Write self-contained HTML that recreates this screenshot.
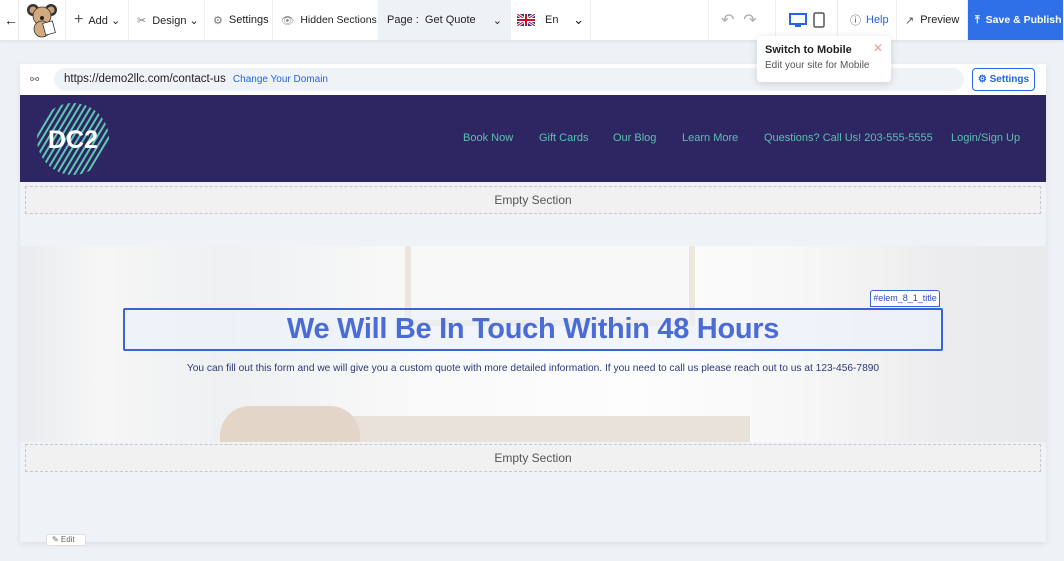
<!DOCTYPE html>
<html><head><meta charset="utf-8"><style>
*{box-sizing:border-box;margin:0;padding:0}
body{width:1064px;height:561px;overflow:hidden;background:#eef2f6;font-family:"Liberation Sans",sans-serif;position:relative;font-size:12px;color:#333}
.top{position:absolute;left:0;top:0;width:1064px;height:41px;background:#fff;border-bottom:1px solid #e3e6ea;box-shadow:0 1px 3px rgba(0,0,0,.06)}
.it{position:absolute;top:0;height:40px;display:flex;align-items:center;border-right:1px solid #eceef1;font-size:11px;color:#222;padding-left:8px;white-space:nowrap;overflow:hidden}
.a{position:absolute}
.frame{position:absolute;left:20px;top:64px;width:1026px;height:478px;background:#eff3f7;box-shadow:0 2px 6px rgba(0,0,0,.08)}
.empty{position:absolute;left:5px;width:1016px;height:28px;background:#f1f1f1;border:1px dashed #c8c8c8;text-align:center;line-height:27px;font-size:12px;color:#555}
.nav a{color:#5bc0ae;text-decoration:none;font-size:11px;position:absolute;top:37px;white-space:nowrap}
</style></head><body>
<div class="top">
 <div class="it" style="left:0;width:19px;padding-left:4px;font-size:14px">←</div>
 <div class="it" style="left:19px;width:47px;padding-left:7px">
  <svg width="32" height="36" viewBox="0 0 32 36"><circle cx="7" cy="8" r="6" fill="#333"/><circle cx="25" cy="8" r="6" fill="#333"/><circle cx="7" cy="8" r="3.5" fill="#c9a07a"/><circle cx="25" cy="8" r="3.5" fill="#c9a07a"/><ellipse cx="16" cy="14" rx="9" ry="9" fill="#d2aa80" stroke="#333" stroke-width=".8"/><ellipse cx="16" cy="27" rx="8" ry="8" fill="#d2aa80" stroke="#333" stroke-width=".8"/><rect x="18" y="20" width="10" height="12" fill="#fff" stroke="#333" stroke-width=".8" transform="rotate(-15 23 26)"/><circle cx="16" cy="16" r="2" fill="#222"/></svg></div>
 <div class="it" style="left:66px;width:63px"><span style="font-size:16px;color:#555;margin-right:5px">+</span>Add ⌄</div>
 <div class="it" style="left:129px;width:76px"><span style="color:#777;margin-right:6px">✂</span>Design ⌄</div>
 <div class="it" style="left:205px;width:68px"><span style="color:#777;margin-right:6px">⚙</span>Settings</div>
 <div class="it" style="left:273px;width:106px;font-size:10.5px"><span style="color:#888;margin-right:6px">👁</span>Hidden Sections</div>
 <div class="it" style="left:379px;width:132px;background:#eef2f7">Page :&nbsp;&nbsp;Get Quote<span style="position:absolute;right:8px">⌄</span></div>
 <div class="it" style="left:511px;width:80px;padding-left:6px"><svg width="18" height="12"><rect width="18" height="12" fill="#1a3a8c"/><path d="M0 0L18 12M18 0L0 12" stroke="#fff" stroke-width="3"/><path d="M0 0L18 12M18 0L0 12" stroke="#c8102e" stroke-width="1"/><path d="M9 0V12M0 6H18" stroke="#fff" stroke-width="4"/><path d="M9 0V12M0 6H18" stroke="#c8102e" stroke-width="2"/></svg><span style="margin-left:10px">En</span><span style="position:absolute;right:6px;font-size:13px">⌄</span></div>
 <div class="it" style="left:708px;width:68px;border-left:1px solid #eceef1;color:#aaa;font-size:16px;padding-left:12px">↶&nbsp;&nbsp;↷</div>
 <div class="it" style="left:776px;width:62px;padding-left:13px"><svg width="18" height="16"><rect x="1" y="2" width="16" height="10" fill="none" stroke="#2563eb" stroke-width="2"/><rect x="6" y="13" width="6" height="2" fill="#2563eb"/></svg><svg width="12" height="16" style="margin-left:6px"><rect x="1" y="1" width="10" height="14" rx="1.5" fill="none" stroke="#555" stroke-width="1.5"/></svg></div>
 <div class="it" style="left:838px;width:59px;color:#2563eb;padding-left:12px"><span style="color:#555;margin-right:5px">ⓘ</span>Help</div>
 <div class="it" style="left:897px;width:71px;padding-left:8px"><span style="color:#555;margin-right:6px">↗</span>Preview</div>
 <div class="it" style="left:968px;width:96px;background:#2f6fe8;color:#fff;font-weight:bold;padding-left:7px;font-size:10.5px"><span style="margin-right:6px">⤒</span>Save &amp; Publish</div>
</div>
<div class="frame">
 <div class="a" style="left:0;top:0;width:1026px;height:31px;background:#fff"></div>
 <div class="a" style="left:10px;top:9px;color:#666;font-size:11px">⚯</div>
 <div class="a" style="left:34px;top:4px;width:910px;height:23px;background:#eff3f7;border-radius:12px;padding:5px 10px;font-size:11.5px;color:#222">https://demo2llc.com/contact-us <span style="color:#2563eb;font-size:10px;margin-left:4px">Change Your Domain</span></div>
 <div class="a" style="left:952px;top:4px;width:63px;height:23px;border:1px solid #2563eb;border-radius:4px;color:#2563eb;font-size:10px;font-weight:bold;text-align:center;line-height:21px">⚙ Settings</div>
 <div class="a nav" style="left:0;top:31px;width:1026px;height:87px;background:#2e2663">
  <svg class="a" style="left:16px;top:7px" width="74" height="74" viewBox="0 0 74 74"><defs><clipPath id="c"><circle cx="37" cy="37" r="36"/></clipPath></defs><g clip-path="url(#c)" stroke="#5ec8b0" stroke-width="2">
  <path d="M-20 90L40 -10M-14 90L46 -10M-8 90L52 -10M-2 90L58 -10M4 90L64 -10M10 90L70 -10M16 90L76 -10M22 90L82 -10M28 90L88 -10M34 90L94 -10M40 90L100 -10M-26 90L34 -10M-32 90L28 -10M-38 90L22 -10"/></g>
  <text x="37" y="46" text-anchor="middle" font-family="Liberation Sans" font-weight="bold" font-size="25" fill="#fff">DC2</text></svg>
  <a style="left:443px">Book Now</a><a style="left:519px">Gift Cards</a><a style="left:593px">Our Blog</a><a style="left:662px">Learn More</a><a style="left:744px">Questions? Call Us! 203-555-5555</a><a style="left:931px">Login/Sign Up</a>
 </div>
 <div class="empty" style="top:122px">Empty Section</div>
 <div class="a" style="left:0;top:182px;width:1026px;height:196px;background:linear-gradient(90deg,#e9ecef 0%,#f6f6f6 8%,#eef0f2 20%,#f9f9f9 38%,#fdfdfd 60%,#f7f7f7 76%,#ececee 90%,#e8eaec 100%);overflow:hidden">
  <div class="a" style="left:385px;top:0;width:290px;height:80px;border:6px solid #ece6dc;border-top:none;background:#f8f8f8"></div>
  <div class="a" style="left:330px;top:170px;width:400px;height:30px;background:#e8e2da"></div>
  <div class="a" style="left:200px;top:160px;width:140px;height:40px;background:#e3d6c8;border-radius:30px 30px 0 0"></div>
 </div>
 <div class="a" style="left:850px;top:226px;width:70px;height:17px;background:#fff;border:1px solid #3b64d8;border-radius:3px 3px 0 0;color:#2b4bc4;font-size:9px;text-align:center;line-height:15px">#elem_8_1_title</div>
 <div class="a" style="left:103px;top:244px;width:820px;height:43px;border:2px solid #3b64d8;border-radius:2px;background:rgba(235,241,252,.6);text-align:center;color:#4b6cd6;font-weight:bold;font-size:29px;line-height:39px;letter-spacing:-0.3px">We Will Be In Touch Within 48 Hours</div>
 <div class="a" style="left:0;top:299px;width:1026px;text-align:center;font-size:10.2px;color:#2a3a7a;white-space:nowrap">You can fill out this form and we will give you a custom quote with more detailed information. If you need to call us please reach out to us at 123-456-7890</div>
 <div class="empty" style="top:380px">Empty Section</div>
 <div class="a" style="left:26px;top:470px;width:40px;height:12px;background:#fff;border:1px solid #ddd;border-radius:3px;font-size:8px;color:#666;padding-left:5px">✎ Edit</div>
</div>
<div class="a" style="left:757px;top:36px;width:134px;height:46px;background:#fff;border-radius:4px;box-shadow:0 2px 8px rgba(0,0,0,.15);padding:8px 8px">
 <div style="font-weight:bold;font-size:11px;color:#222">Switch to Mobile</div>
 <div style="font-size:10px;color:#555;margin-top:4px">Edit your site for Mobile</div>
 <div class="a" style="right:8px;top:5px;color:#f19a9a;font-size:12px">✕</div>
</div>
</body></html>
